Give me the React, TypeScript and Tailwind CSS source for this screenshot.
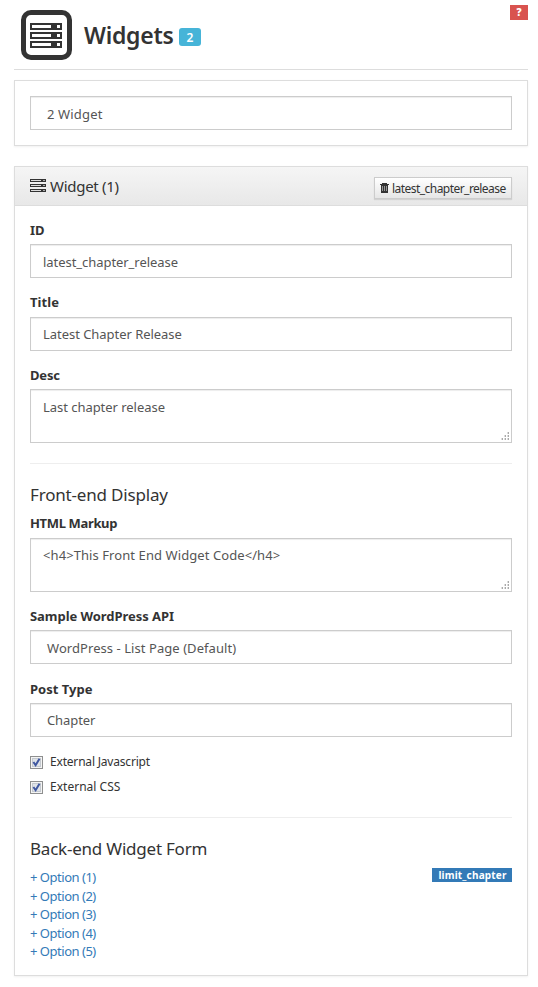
import type { ReactNode } from "react";

function ServerIcon({ className }: { className: string }) {
  return (
    <svg className={className} viewBox="0 0 32 25" fill="none" shapeRendering="crispEdges">
      {[0, 9, 18].map((y) => (
        <g key={y}>
          <rect x="0" y={y} width="32" height="7" fill="#333" />
          <rect x="2" y={y + 2} width="19" height="3" fill="#fff" />
          <rect x="27" y={y + 2} width="3" height="3" fill="#fff" />
        </g>
      ))}
    </svg>
  );
}

function SmallServerIcon() {
  return (
    <svg className="-mt-px h-[13px] w-4" viewBox="0 0 16 13" shapeRendering="crispEdges">
      {[0, 5, 10].map((y) => (
        <g key={y}>
          <rect x="0" y={y} width="16" height="3" fill="#333" />
          <rect x="1" y={y + 1} width="10" height="1" fill="#ddd" />
          <rect x="13" y={y + 1} width="2" height="1" fill="#aaa" />
        </g>
      ))}
    </svg>
  );
}

function TrashIcon() {
  return (
    <svg className="mt-px h-[10px] w-[9px] shrink-0" viewBox="0 0 9 10" shapeRendering="crispEdges">
      <path d="M0 1H2V0H7V1H9V2H8V10H1V2H0Z" fill="#333" />
      <path d="M2.5 3V8M4.5 3V8M6.5 3V8" stroke="#999" strokeWidth="1" />
    </svg>
  );
}

function Grip() {
  const dots = [[6, 0], [3, 3], [6, 3], [0, 6], [3, 6], [6, 6]];
  return (
    <svg className="absolute right-[2px] bottom-[2px] h-2 w-2" viewBox="0 0 8 8" shapeRendering="crispEdges">
      {dots.map(([x, y]) => (
        <g key={`${x}-${y}`}>
          <rect x={x} y={y} width="2" height="2" fill="#ddd" />
          <rect x={x + 1} y={y} width="1" height="2" fill="#aaa" />
        </g>
      ))}
    </svg>
  );
}

function Label({ children, className }: { children: ReactNode; className: string }) {
  return <div className={`flex items-end text-[13px] leading-5 font-bold ${className}`}><span>{children}</span></div>;
}

const box = "border border-[#ccc] bg-white text-[13px] text-[#555] shadow-[inset_0_1px_1px_rgba(0,0,0,0.075)]";

function Input({ children, className }: { children: ReactNode; className: string }) {
  return <div className={`flex h-[34px] items-center ${box} ${className}`}><span>{children}</span></div>;
}

function TextArea({ children, className }: { children: ReactNode; className: string }) {
  return (
    <div className={`relative h-[54px] px-3 leading-5 ${box} ${className}`}>
      <span>{children}</span>
      <Grip />
    </div>
  );
}

function Check({ children, className }: { children: ReactNode; className: string }) {
  return (
    <div className="flex h-[25px] items-start text-[12px]">
      <svg className="h-[13px] w-[13px]" viewBox="0 0 13 13">
        <rect x=".5" y=".5" width="12" height="12" fill="#f4f4f4" stroke="#8e8f8f" />
        <rect x="2.5" y="2.5" width="8" height="8" fill="#dfe3e8" stroke="#c4c9cf" />
        <path d="M3.4 6 5.6 9.2 9.5 2.8" fill="none" stroke="#3f57a0" strokeWidth="2" />
      </svg>
      <span className={`-mt-[3px] ml-[7px] leading-[18px] ${className}`}>{children}</span>
    </div>
  );
}

export default function App() {
  return (
    <main className="h-[987px] w-[538px] overflow-hidden bg-white pr-[10px] pl-[14px] font-['Noto_Sans',sans-serif] whitespace-nowrap text-[#333]">
      <header className="flex h-[70px] items-start border-b border-[#ddd]">
        <div className="mt-[10px] ml-[7px] h-[50px] w-[51px] rounded-[10px] border-5 border-[#333] pt-2 pl-1">
          <ServerIcon className="h-[25px] w-8" />
        </div>
        <h1 className="mt-[17px] ml-3 w-[95px] text-[23px] leading-9 font-semibold tracking-[-0.25px]"><span>Widgets</span></h1>
        <div className="mt-[28px] flex h-[18px] w-[22px] items-center justify-center rounded-[3px] bg-[#46b4d8] pt-px text-[12px] font-semibold text-white">2</div>
        <div className="mt-[5px] ml-auto flex h-[15px] w-[18px] items-center justify-center bg-[#d9534f] text-[10px] font-black text-white">?</div>
      </header>

      <section className="mt-[10px] h-[66px] border border-[#ddd] p-[15px] shadow-[0_1px_2px_rgba(0,0,0,0.06)]">
        <Input className="pt-[3px] pl-4 tracking-[0.15px]">2 Widget</Input>
      </section>

      <section className="mt-5 h-[810px] border border-[#ddd] shadow-[0_1px_2px_rgba(0,0,0,0.06)]">
        <div className="flex h-[39px] items-center border-b border-[#ddd] bg-linear-to-b from-[#f5f5f5] to-[#e8e8e8] px-[15px]">
          <SmallServerIcon />
          <span className="ml-1 text-[15px] tracking-[-0.28px]">Widget (1)</span>
          <div className="mt-[3px] ml-auto flex h-[22px] w-[138px] items-center border border-[#ccc] bg-linear-to-b from-white to-[#e6e6e6] pl-[5px] text-[12px] shadow-[0_1px_1px_rgba(0,0,0,0.1)]">
            <TrashIcon />
            <span className="mt-0.5 ml-[3px] tracking-[-0.54px]">latest_chapter_release</span>
          </div>
        </div>

        <div className="px-[15px]">
          <Label className="h-[38px] pb-[4px]">ID</Label>
          <Input className="pt-[3px] pl-3 tracking-[-0.05px]">latest_chapter_release</Input>
          <Label className="h-[39px] pb-[5px] tracking-[0.1px]">Title</Label>
          <Input className="pt-0.5 pl-3 tracking-[-0.04px]">Latest Chapter Release</Input>
          <Label className="h-[38px] pb-[4px] tracking-[-0.15px]">Desc</Label>
          <TextArea className="pt-[7px] tracking-[-0.04px]">Last chapter release</TextArea>

          <hr className="mt-5 border-[#eee]" />
          <h2 className="mt-[19px] h-6 text-[17px] leading-6 tracking-[-0.18px]"><span>Front-end Display</span></h2>
          <Label className="h-[31px] pb-[5px] tracking-[-0.35px]">HTML Markup</Label>
          <TextArea className="pt-[6px] tracking-[0.08px]">{"<h4>This Front End Widget Code</h4>"}</TextArea>
          <Label className="h-[38px] pb-[4px] tracking-[-0.05px]">Sample WordPress API</Label>
          <Input className="pt-[3px] pl-4 tracking-[0.06px]">WordPress - List Page (Default)</Input>
          <Label className="h-[39px] pb-[4px]">Post Type</Label>
          <Input className="pt-0.5 pl-4 tracking-[-0.1px]">Chapter</Input>

          <div className="h-[80px] pt-[19px]">
            <Check className="tracking-[-0.19px]">External Javascript</Check>
            <Check className="tracking-[0.02px]">External CSS</Check>
          </div>
          <hr className="border-[#eee]" />
          <h2 className="mt-[19px] h-[31px] text-[17px] leading-6 tracking-[-0.22px]"><span>Back-end Widget Form</span></h2>
          <div className="flex items-start justify-between">
            <ul className="text-[13px] leading-[18.57px] tracking-[-0.48px] text-[#337ab7]">
              {[1, 2, 3, 4, 5].map((n) => (
                <li key={n}><span>+ Option ({n})</span></li>
              ))}
            </ul>
            <div className="flex h-[14px] w-20 items-center justify-center bg-[#337ab7] pl-px text-[10px] font-bold tracking-[0.18px] text-white"><span>limit_chapter</span></div>
          </div>
        </div>
      </section>
    </main>
  );
}
